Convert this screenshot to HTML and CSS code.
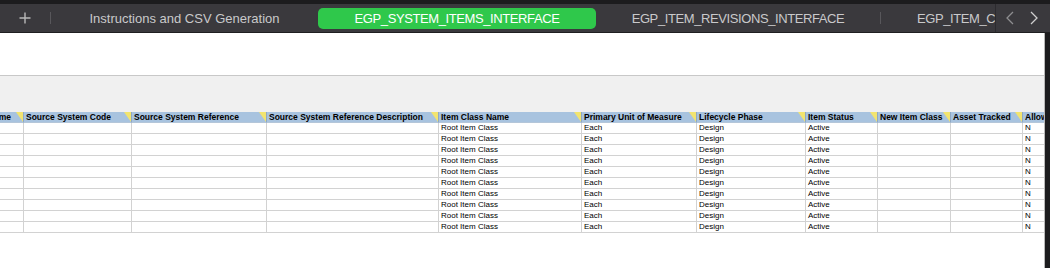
FILE: index.html
```html
<!DOCTYPE html>
<html lang="en">
<head>
    <meta charset="UTF-8">
    <meta name="viewport" content="width=device-width, initial-scale=1.0">
    <title>EGP_SYSTEM_ITEMS_INTERFACE</title>
    <link rel="stylesheet" href="styles.css">
</head>
<body>
    <div class="top-strip"></div>
    <div class="tab-bar">
        <div class="tab-add">
            <svg width="12" height="12" viewBox="0 0 12 12"><path d="M6 0.5V11.5M0.5 6H11.5" stroke="#b8b8b8" stroke-width="1.4" fill="none"/></svg>
        </div>
        <div class="tab-sep"></div>
        <div class="tab tab-first">Instructions and CSV Generation</div>
        <div class="tab tab-active tab-caps">EGP_SYSTEM_ITEMS_INTERFACE</div>
        <div class="tab tab-third tab-caps">EGP_ITEM_REVISIONS_INTERFACE</div>
        <div class="tab-sep"></div>
        <div class="tab tab-last tab-caps">EGP_ITEM_CATEGORIES_INTERFACE</div>
        <div class="tab-nav">
            <svg width="8" height="14" viewBox="0 0 8 14"><path d="M7 1L1 7L7 13" stroke="#8e8e90" stroke-width="1.3" fill="none"/></svg>
            <svg width="8" height="14" viewBox="0 0 8 14"><path d="M1 1L7 7L1 13" stroke="#cfcfcf" stroke-width="1.3" fill="none"/></svg>
        </div>
    </div>
    <div class="main">
        <div class="sheet">
            <div class="sheet-blank"></div>
            <div class="sheet-toolbar"></div>
            <div class="grid">
                <div class="row head">
                    <div class="cell cell-clip"><span>Item Name</span></div>
                    <div class="cell">Source System Code</div>
                    <div class="cell">Source System Reference</div>
                    <div class="cell">Source System Reference Description</div>
                    <div class="cell">Item Class Name</div>
                    <div class="cell">Primary Unit of Measure</div>
                    <div class="cell">Lifecycle Phase</div>
                    <div class="cell">Item Status</div>
                    <div class="cell">New Item Class</div>
                    <div class="cell">Asset Tracked</div>
                    <div class="cell">Allowed</div>
                </div>
            </div>
        </div>
        <div class="side"></div>
    </div>
    <script>
        const grid = document.querySelector('.grid');
        for (let i = 0; i < 10; i++) {
            const row = document.createElement('div');
            row.className = 'row';
            const values = ['', '', '', '', 'Root Item Class', 'Each', 'Design', 'Active', '', '', 'N'];
            values.forEach((v) => {
                const cell = document.createElement('div');
                cell.className = 'cell';
                cell.textContent = v;
                row.appendChild(cell);
            });
            grid.appendChild(row);
        }
    </script>
</body>
</html>
```

FILE: styles.css
```css
*{
    padding: 0;
    margin: 0;
    box-sizing: border-box;
}
body{
    background-color: #1c1c1e;
    width: 1050px;
    height: 268px;
    overflow: hidden;
    font-family: "Liberation Sans", Arial, sans-serif;
}
.top-strip{
    height: 4px;
    background-color: #1c1c1e;
}
.tab-bar{
    height: 29px;
    display: flex;
    align-items: center;
    background-color: #3a393d;
    border-bottom: 1px solid #1f1f21;
    overflow: hidden;
    font-size: 13px;
    color: #c9c9cb;
}
.tab-add{
    width: 50px;
    height: 100%;
    display: flex;
    align-items: center;
    justify-content: center;
}
.tab-sep{
    width: 1px;
    height: 12px;
    background-color: #58575b;
    flex-shrink: 0;
}
.tab{
    height: 21px;
    display: flex;
    align-items: center;
    justify-content: center;
    white-space: nowrap;
    flex-shrink: 0;
}
.tab-caps{
    letter-spacing: -0.4px;
}
.tab-first{
    width: 267px;
}
.tab-active{
    width: 278px;
    background-color: #2fc84b;
    border-radius: 5px;
    color: #ffffff;
}
.tab-third{
    width: 284px;
}
.tab-last{
    width: 114px;
    justify-content: flex-start;
    padding-left: 36px;
    overflow: hidden;
    flex-shrink: 1;
}
.tab-nav{
    height: 100%;
    flex: 1;
    display: flex;
    align-items: center;
    justify-content: space-around;
    border-left: 1px solid #2c2b2f;
    padding: 0 4px 0 2px;
}
.main{
    display: flex;
    height: 235px;
}
.sheet{
    width: 1045px;
    background-color: #ffffff;
    border-right: 1px solid #b9b9b9;
    overflow: hidden;
}
.side{
    flex: 1;
    background-color: #1c1c1e;
}
.sheet-blank{
    height: 43px;
    border-bottom: 1px solid #c8c8c8;
}
.sheet-toolbar{
    height: 36px;
    background-color: #f0f0f0;
}
.row{
    display: grid;
    grid-template-columns: 24px 108px 135px 172px 143px 115px 109px 72px 73px 72px 60px;
    height: 11px;
    font-size: 8px;
    line-height: 10px;
    color: #000000;
}
.cell{
    position: relative;
    border-right: 1px solid #d2d2d2;
    border-bottom: 1px solid #d2d2d2;
    padding-left: 2px;
    white-space: nowrap;
    overflow: hidden;
}
.head{
    font-weight: bold;
    font-size: 8.5px;
    background-color: #a8c3df;
}
.head .cell{
    border-right-color: #8fa8c4;
    border-bottom-color: #b4c6d9;
}
.head .cell::after{
    content: "";
    position: absolute;
    top: 0;
    right: 0;
    width: 7px;
    height: 10px;
    background-color: #f2e46f;
    clip-path: polygon(0 0, 100% 0, 100% 100%);
}
.head .cell:last-child::after{
    display: none;
}
.cell-clip{
    display: flex;
    justify-content: flex-end;
    padding-right: 12px;
}
.cell-clip span{
    flex-shrink: 0;
}
```
